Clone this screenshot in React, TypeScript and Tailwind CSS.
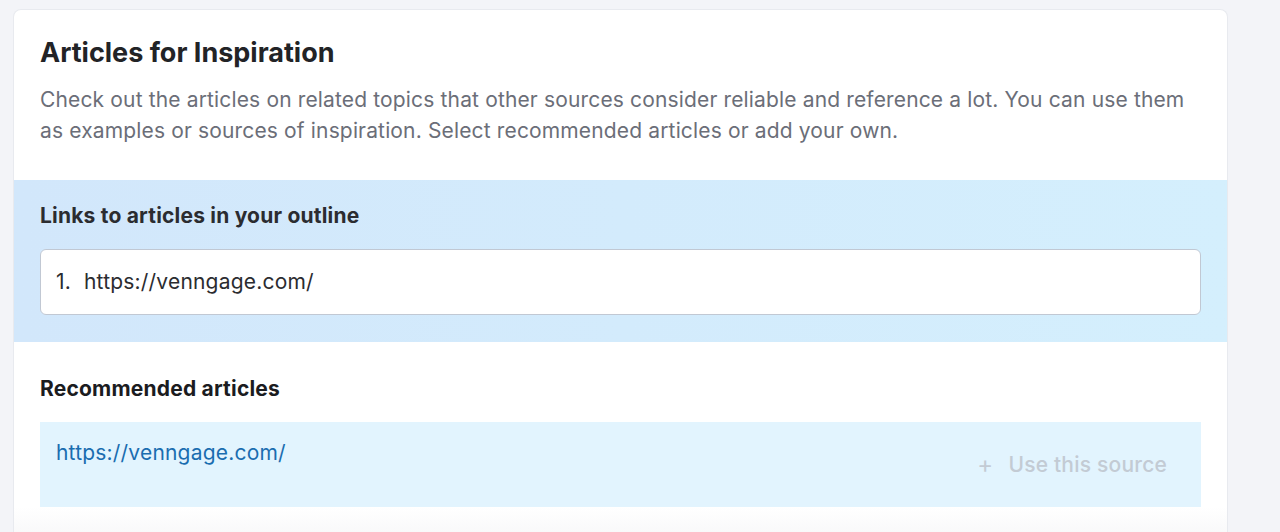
const App = () => {
  return (
    <div className="min-h-screen bg-[#f3f4f8] pt-[9px] pl-[13px] pr-[52px] font-['Inter',sans-serif]">
      <div className="h-[523px] overflow-hidden rounded-t-lg border border-b-0 border-[#e8eaef] bg-white">
        {/* Header */}
        <div className="px-[26px] pt-[27px] pb-[34px]">
          <h1 className="text-[27px] leading-[32px] font-bold text-[#222326]">Articles for Inspiration</h1>
          <p className="mt-[15px] max-w-[1150px] text-[21px] leading-[31px] tracking-[0.15px] text-[#6b6e78]">
            Check out the articles on related topics that other sources consider reliable and reference a lot. You can use them as examples or sources of inspiration. Select recommended articles or add your own.
          </p>
        </div>

        {/* Outline links */}
        <div className="h-[162px] bg-gradient-to-r from-[#d2e7fb] to-[#d4effd] px-[26px] pt-[23px]">
          <h2 className="text-[21px] leading-[26px] font-bold tracking-[0.2px] text-[#2b2c30]">Links to articles in your outline</h2>
          <div className="mt-[20px] flex h-[66px] items-center rounded-md border border-[#c1c8d3] bg-white px-[15px] text-[21px] tracking-[0.2px] text-[#2b2c30]">
            <span className="w-[28px]">1.</span>
            <span>https://venngage.com/</span>
          </div>
        </div>

        {/* Recommended */}
        <div className="px-[26px] pt-[34px]">
          <h2 className="text-[21px] leading-[26px] font-bold tracking-[0.2px] text-[#1b1c1f]">Recommended articles</h2>
          <div className="mt-[20px] flex h-[85px] justify-between bg-[#e2f4fe] pl-[16px] pr-[34px]">
            <a className="pt-[17px] text-[21px] leading-[28px] tracking-[0.2px] text-[#1a6db0]">https://venngage.com/</a>
            <div className="flex items-center gap-[15px] text-[21px] font-medium tracking-[0.2px] text-[#c3cbd4]">
              <span className="text-[24px] font-normal">+</span>
              <span>Use this source</span>
            </div>
          </div>
        </div>
        <div className="h-[30px] bg-gradient-to-b from-white to-[#f8f8f9]" />
      </div>
    </div>
  );
};

export default App;
